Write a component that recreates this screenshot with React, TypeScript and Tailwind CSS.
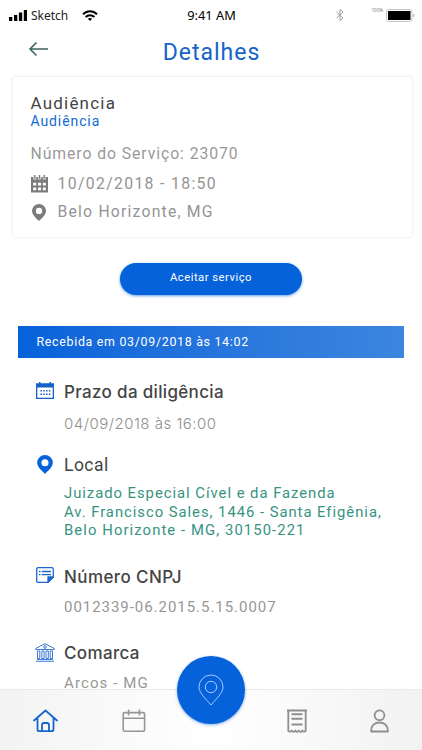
import type { ReactNode } from "react";

type Section = {
  icon: ReactNode;
  title: string;
  titleClass: string;
  body: ReactNode;
  bodyClass: string;
  className: string;
};

const SECTIONS: Section[] = [
  {
    icon: <DateIcon />,
    title: "Prazo da diligência",
    titleClass: "font-['Inter'] text-[17px] font-medium tracking-[0.33px]",
    body: "04/09/2018 às 16:00",
    bodyClass: "mt-[11px] font-['Inter'] font-light text-[15px] tracking-[0.5px] text-[#8f8f8f]",
    className: "mt-6 h-[73px]",
  },
  {
    icon: <PinIcon className="ml-px h-[19px] w-4 text-[#0562da]" />,
    title: "Local",
    titleClass: "text-[17.5px] tracking-[0.45px]",
    body: (
      <>
        Juizado Especial Cível e da Fazenda
        <br />
        Av. Francisco Sales, 1446 - Santa Efigênia,
        <br />
        <span className="tracking-[1.1px]">Belo Horizonte - MG, 30150-221</span>
      </>
    ),
    bodyClass: "mt-[9px] text-[14.8px] leading-[18.5px] tracking-[0.98px] text-[#37937f]",
    className: "h-[112px]",
  },
  {
    icon: <NoteIcon />,
    title: "Número CNPJ",
    titleClass: "font-['Inter'] text-[17px] font-medium tracking-[0.4px]",
    body: "0012339-06.2015.5.15.0007",
    bodyClass: "mt-[9px] text-[15px] tracking-[0.96px] text-[#979797]",
    className: "h-[76px]",
  },
  {
    icon: <CourtIcon />,
    title: "Comarca",
    titleClass: "font-['Inter'] text-[17px] font-medium tracking-[0.35px]",
    body: "Arcos - MG",
    bodyClass: "mt-[14px] text-[15px] leading-3 tracking-[1.1px] text-[#979797]",
    className: "h-[46px]",
  },
];

export default function App() {
  return (
    <div className="flex h-[750px] w-[422px] flex-col overflow-hidden bg-white font-['Roboto',sans-serif] text-[#444]">
      <StatusBar />

      <header className="grid h-[46px] shrink-0 grid-cols-[80px_1fr_80px]">
        <svg className="mt-[11px] ml-7 h-4 w-5" viewBox="0 0 20 16" fill="none" stroke="#38665f" strokeWidth="1.6">
          <path d="M20 8H2M8.5 1.5 2 8l6.5 6.5" />
        </svg>
        <h1 className="mt-2 pl-px text-center text-[23px] leading-[30px] tracking-[1px] text-[#1463c8]">Detalhes</h1>
      </header>

      <main className="min-h-0 flex-1">
        <section className="mr-[9px] ml-3 h-[162px] rounded-[3px] border border-[#f3f3f3] px-[17.5px] pt-4 shadow-[0_0_3px_rgba(0,0,0,0.04)]">
          <h2 className="text-[17px] leading-5 tracking-[1.2px]">Audiência</h2>
          <p className="text-[14px] leading-4 tracking-[0.9px] text-[#126bd1]">Audiência</p>
          <p className="mt-[15px] text-[15.75px] leading-5 tracking-[0.93px] text-[#999]">Número do Serviço: 23070</p>
          <div className="mt-[10px] flex h-5 items-center">
            <SolidCalendar />
            <span className="ml-[10px] text-[15.75px] leading-5 tracking-[1.35px] text-[#949494]">10/02/2018 - 18:50</span>
          </div>
          <div className="mt-2 flex h-5 items-center">
            <PinIcon className="ml-px h-[17px] w-[14px] text-[#7c7c7c]" />
            <span className="ml-3 text-[15.75px] leading-5 tracking-[1.2px] text-[#949494]">Belo Horizonte, MG</span>
          </div>
        </section>

        <button className="mx-auto mt-[25px] block h-8 w-[182px] rounded-full bg-[#0562da] pb-0.5 text-[11.25px] tracking-[0.5px] text-white shadow-[0_1px_3px_rgba(5,98,218,0.6)]">
          Aceitar serviço
        </button>

        <div className="mx-[18px] mt-[31px] flex h-8 items-center bg-linear-to-r from-[#0562da] to-[#3c86de] pl-[18.5px] text-[12.4px] tracking-[0.7px] text-white">
          Recebida em 03/09/2018 às 14:02
        </div>

        {SECTIONS.map((s) => (
          <section key={s.title} className={`flex pl-9 ${s.className}`}>
            <div className="w-7 shrink-0">{s.icon}</div>
            <div className="whitespace-nowrap">
              <h3 className={`leading-5 ${s.titleClass}`}>{s.title}</h3>
              <p className={s.bodyClass}>{s.body}</p>
            </div>
          </section>
        ))}
      </main>

      <BottomNav />
    </div>
  );
}

function StatusBar() {
  return (
    <div className="grid h-[30px] shrink-0 grid-cols-3 items-center font-['Noto_Sans',sans-serif] text-black">
      <div className="flex items-center pl-[9px]">
        <svg className="h-[11px] w-[18px]" viewBox="0 0 18 11">
          <path d="M0 7h3.3v4H0zM5 5h3.3v6H5zM9.9 2.5h3.3V11H9.9zM14.8 0h3.2v11h-3.2z" />
        </svg>
        <span className="mt-px ml-1 text-[12px] text-[#222]">Sketch</span>
        <svg className="ml-3.5 h-[11px] w-4" viewBox="0 0 16 11" fill="none" stroke="black" strokeWidth="2">
          <path d="M1 4.2C5 .1 11 .1 15 4.2M3.6 7c2.5-2.5 6.3-2.5 8.8 0" />
          <path d="M5.8 8.8c1.3-1.2 3.1-1.2 4.4 0L8 11z" fill="black" stroke="none" />
        </svg>
      </div>
      <div className="mt-px pl-px text-center text-[12.8px]">9:41 AM</div>
      <div className="flex items-center justify-end pr-[7px]">
        <svg className="h-3 w-2" viewBox="0 0 8 12" fill="none" stroke="#8c8c8c" strokeWidth="0.8">
          <path d="m.5 3 6.5 6L4 11.5V.5L7 3 .5 9" />
        </svg>
        <span className="mb-[9px] ml-[28px] text-[4.5px] leading-none text-[#777]">100%</span>
        <svg className="ml-[3px] h-[13px] w-[29px]" viewBox="0 0 29 13">
          <rect x="0.5" y="0.5" width="25.5" height="12" rx="2.5" fill="white" stroke="#c4c4c4" />
          <rect x="2" y="2" width="22.5" height="9" rx="0.5" />
          <path d="M27.5 4.5q2 2 0 4z" fill="#999" />
        </svg>
      </div>
    </div>
  );
}

function BottomNav() {
  return (
    <nav className="relative flex h-[61px] shrink-0 border-t border-[#e9e9e9] bg-linear-to-r from-[#f3f3f3] via-white to-[#f2f2f2]">
      <div className="flex w-full items-start pt-[19px]">
        <svg className="ml-[33px] h-6 w-[25px]" viewBox="0 0 25 24" fill="none" stroke="#1865c9" strokeWidth="1.8" strokeLinejoin="round" strokeLinecap="round">
          <path d="M1 11.5 12.5 1.5 24 11.5M4.5 9v11.2q0 2 2 2h12q2 0 2-2V9" />
          <path d="M9 22v-6q0-2 2-2h3q2 0 2 2v6" />
        </svg>
        <svg className="ml-16 h-6 w-6" viewBox="0 0 24 24" fill="none" stroke="#969696" strokeWidth="1.6">
          <rect x="1.2" y="3.6" width="21.4" height="18.6" rx="1.5" />
          <path d="M1 9.2h21.5M6.6.5v6M17.4.5v6" />
        </svg>
        <svg className="ml-[141px] h-6 w-5" viewBox="0 0 20 24" fill="none" stroke="#8e8e8e" strokeWidth="1.8">
          <path d="M0 1.5h20M1.3 1.5v20.4q1.8 1.6 3.5-.2 1.7 2.3 3.5 0 1.7 2.3 3.4 0 1.8 2.3 3.5 0 1.7 1.8 3.5.2V1.5" />
          <path d="M4.5 5.3h11M4.5 9.8h11M4.5 15.4h11" strokeWidth="2" />
        </svg>
        <svg className="ml-[63px] h-6 w-[19px]" viewBox="0 0 19 24" fill="none" stroke="#8e8e8e" strokeWidth="1.8" strokeLinejoin="round">
          <circle cx="9.5" cy="6.3" r="4.9" />
          <path d="M1.2 22.5c-.4-5.5 3-9 8.3-9s8.7 3.5 8.3 9z" />
        </svg>
      </div>
      <button className="absolute -top-[34px] left-[177px] grid size-[68px] place-items-center rounded-full bg-[#0562da] shadow-[0_1px_3px_rgba(5,98,218,0.5)]">
        <svg className="h-8 w-[26px]" viewBox="0 0 26 32" fill="none" stroke="#b8d5ff" strokeWidth="0.9">
          <path d="M13 31C8 25 1 19 1 13a12 12 0 0 1 24 0c0 6-7 12-12 18z" />
          <circle cx="13" cy="13" r="5.7" />
        </svg>
      </button>
    </nav>
  );
}

function PinIcon({ className }: { className: string }) {
  return (
    <svg className={className} viewBox="0 0 14 17" fill="currentColor" fillRule="evenodd">
      <path d="M7 17C4.5 14.5 0 11 0 6.8a7 6.8 0 0 1 14 0c0 4.2-4.5 7.7-7 10.2zM7 3.7a3.2 3.2 0 1 0 0 6.4 3.2 3.2 0 0 0 0-6.4z" />
    </svg>
  );
}

function SolidCalendar() {
  return (
    <svg className="h-[18px] w-[17px]" viewBox="0 0 17 18">
      <path d="M0 2h17v15.5H0z" fill="#7c7c7c" />
      <path d="M2.7 0v4.2h2.2V0M7.4 0v4.2h2.2V0M12.1 0v4.2h2.2V0" fill="#7c7c7c" stroke="white" strokeWidth="0.7" />
      <path d="M2.2 7.7h3v2.8h-3zM7 7.7h3v2.8H7zM11.8 7.7h3v2.8h-3zM2.2 12.4h3v2.8h-3zM7 12.4h3v2.8H7zM11.8 12.4h3v2.8h-3z" fill="white" />
    </svg>
  );
}

function DateIcon() {
  return (
    <svg className="h-[17px] w-[18px]" viewBox="0 0 18 17" fill="#1560c9">
      <path fillRule="evenodd" d="M0 1.2h3V0h1.5v1.2h9V0H15v1.2h3V17H0zM1.3 5.5v10.2h15.4V5.5z" />
      <path d="M4.5 8h1.5v1.5H4.5zM7.3 8h1.5v1.5H7.3zM10.1 8h1.5v1.5h-1.5zM12.9 8h1.5v1.5h-1.5z" />
      <path d="M4.5 11.5h1.5V13H4.5zM7.3 11.5h1.5V13H7.3zM10.1 11.5h1.5V13h-1.5zM12.9 11.5h1.5V13h-1.5z" />
    </svg>
  );
}

function NoteIcon() {
  return (
    <svg className="h-4 w-[18px]" viewBox="0 0 18 16" fill="none" stroke="#1b66cf" strokeWidth="1.3">
      <path d="M12 15.3H2.2q-1.5 0-1.5-1.5V2.2Q.7.7 2.2.7h13.6q1.5 0 1.5 1.5V10z" />
      <path d="M12 15.3V10h5.3z" fill="#1b66cf" />
      <path d="M3 4.5h1.5M5.7 4.5H15M3 7.6h1.5M5.7 7.6H15" />
    </svg>
  );
}

function CourtIcon() {
  return (
    <svg className="-ml-px h-[19px] w-5" viewBox="0 0 20 19" fill="none" stroke="#3a7bd8" strokeWidth="1">
      <path d="M.7 5.5 10 .7l9.3 4.8v1H.7zM1 18.3h18M2 16.5h16" />
      <circle cx="10" cy="4" r="1.3" />
      <path d="M2.5 8h2.3v7.5H2.5zM6.8 8h2.3v7.5H6.8zM11 8h2.3v7.5H11zM15.2 8h2.3v7.5h-2.3z" />
    </svg>
  );
}
